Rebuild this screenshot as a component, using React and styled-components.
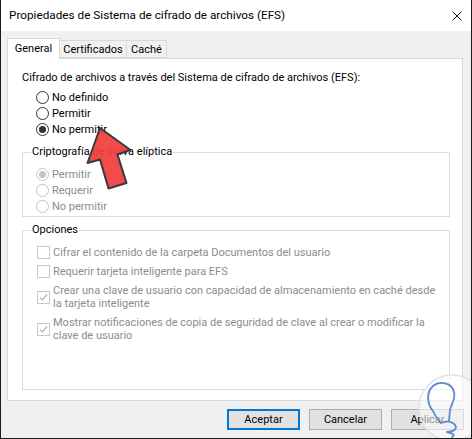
import React from "react";
import styled, { createGlobalStyle } from "styled-components";

const Global = createGlobalStyle`
  html, body { margin: 0; padding: 0; background: #fff; }
  body { font-family: Roboto, "Noto Sans", sans-serif; }
  * { box-sizing: border-box; }
`;

const Window = styled.div`
  position: relative;
  width: 472px;
  height: 439px;
  display: flex;
  flex-direction: column;
  border: 1px solid #1b1b1b;
  border-top: none;
  background: #f0f0f0;
  overflow: hidden;
  font-size: 11px;
  color: #000;
`;

const TitleBar = styled.div`
  height: 31px;
  flex: none;
  background: #fff;
  display: flex;
  align-items: center;
  justify-content: space-between;
  padding: 0 9px 0 8px;
  font-size: 11.75px;
`;

const TitleText = styled.span`
  padding-bottom: 1px;
`;

const Body = styled.div`
  flex: 1;
  display: flex;
  flex-direction: column;
  padding: 7px 8px 0 6px;
`;

const TabRow = styled.div`
  display: flex;
  align-items: flex-end;
  height: 21px;
  position: relative;
  z-index: 1;
  margin-bottom: -1px;
`;

const Tab = styled.div`
  width: ${(p) => p.$w}px;
  height: ${(p) => (p.$active ? "21px" : "18px")};
  padding-bottom: ${(p) => (p.$active ? "2px" : "0")};
  display: flex;
  align-items: center;
  justify-content: center;
  background: ${(p) => (p.$active ? "#fff" : "#f0f0f0")};
  border: 1px solid #d9d9d9;
  border-bottom: ${(p) => (p.$active ? "none" : "1px solid #d9d9d9")};
  margin-left: ${(p) => (p.$first ? "0" : "-1px")};
  ${(p) => (p.$active ? "" : "margin-bottom: 1px;")}
  white-space: nowrap;
`;

const Panel = styled.div`
  height: 343px;
  background: #fff;
  border: 1px solid #d9d9d9;
  padding: 11px 12px 0 14px;
  display: flex;
  flex-direction: column;
`;

const Heading = styled.div`
  line-height: 16px;
  white-space: nowrap;
`;

const RadioList = styled.div`
  display: flex;
  flex-direction: column;
  padding-left: 14px;
  margin-top: 3px;
`;

const RadioRow = styled.label`
  display: flex;
  align-items: center;
  height: 16px;
  gap: 3px;
  color: ${(p) => (p.$disabled ? "#8c8c8c" : "#000")};
  white-space: nowrap;
`;

const RadioCircle = styled.span`
  width: 13px;
  height: 13px;
  border-radius: 50%;
  border: 1px solid ${(p) => (p.$disabled ? "#c4c4c4" : "#333")};
  background: #fff;
  display: flex;
  align-items: center;
  justify-content: center;
  flex: none;
  &::after {
    content: "";
    width: 7px;
    height: 7px;
    border-radius: 50%;
    background: ${(p) => (p.$disabled ? "#c4c4c4" : "#333")};
    display: ${(p) => (p.$checked ? "block" : "none")};
  }
`;

const Group = styled.fieldset`
  margin: ${(p) => p.$mt || 0}px 0 0 0;
  padding: 0;
  border: 1px solid #dcdcdc;
  height: ${(p) => p.$h}px;
  min-width: 0;
`;

const Legend = styled.legend`
  margin-left: 8px;
  padding: 0 1px;
  line-height: 14px;
  color: #000;
`;

const GroupRadios = styled.div`
  display: flex;
  flex-direction: column;
  padding: 7px 0 0 13px;
`;

const CheckList = styled.div`
  display: flex;
  flex-direction: column;
  gap: 6px;
  padding: 9px 0 0 14px;
`;

const CheckRow = styled.div`
  display: flex;
  align-items: center;
  gap: 3px;
  color: #8c8c8c;
  line-height: 13px;
`;

const CheckBox = styled.span`
  width: 13px;
  height: 13px;
  border: 1px solid #c8c8c8;
  background: #fff;
  flex: none;
  display: flex;
  align-items: center;
  justify-content: center;
`;

const CheckText = styled.span`
  white-space: nowrap;
`;

const ButtonRow = styled.div`
  display: flex;
  justify-content: flex-end;
  gap: 9px;
  padding: 8px 0 0 0;
  margin-right: -1px;
`;

const Button = styled.div`
  width: 73px;
  height: 21px;
  background: #e1e1e1;
  border: ${(p) => (p.$default ? "2px solid #0078d7" : "1px solid #adadad")};
  display: flex;
  align-items: center;
  justify-content: center;
  padding-bottom: 1px;
`;

const Overlay = styled.svg`
  position: absolute;
  left: -1px;
  top: 0;
  pointer-events: none;
`;

function Radio({ checked, disabled, children }) {
  return (
    <RadioRow $disabled={disabled}>
      <RadioCircle $checked={checked} $disabled={disabled} />
      {children}
    </RadioRow>
  );
}

function Check({ checked, children }) {
  return (
    <CheckRow>
      <CheckBox>
        {checked && (
          <svg width="9" height="9" viewBox="0 0 9 9">
            <path d="M1 4.5 L3.5 7 L8 1.5" fill="none" stroke="#b8b8b8" strokeWidth="1.2" />
          </svg>
        )}
      </CheckBox>
      <CheckText>{children}</CheckText>
    </CheckRow>
  );
}

export default function App() {
  return (
    <>
      <Global />
      <Window>
        <TitleBar>
          <TitleText>Propiedades de Sistema de cifrado de archivos (EFS)</TitleText>
          <svg width="10" height="10" viewBox="0 0 10 10">
            <path d="M0.5 0.5 L9.5 9.5 M9.5 0.5 L0.5 9.5" stroke="#111" strokeWidth="1" />
          </svg>
        </TitleBar>
        <Body>
          <TabRow>
            <Tab $active $first $w={53}>General</Tab>
            <Tab $w={68}>Certificados</Tab>
            <Tab $w={41}>Caché</Tab>
          </TabRow>
          <Panel>
            <Heading>Cifrado de archivos a través del Sistema de cifrado de archivos (EFS):</Heading>
            <RadioList>
              <Radio>No definido</Radio>
              <Radio>Permitir</Radio>
              <Radio checked>No permitir</Radio>
            </RadioList>
            <Group $mt={8} $h={72}>
              <Legend>Criptografía de curva elíptica</Legend>
              <GroupRadios>
                <Radio checked disabled>Permitir</Radio>
                <Radio disabled>Requerir</Radio>
                <Radio disabled>No permitir</Radio>
              </GroupRadios>
            </Group>
            <Group $mt={6} $h={167}>
              <Legend>Opciones</Legend>
              <CheckList>
                <Check>Cifrar el contenido de la carpeta Documentos del usuario</Check>
                <Check>Requerir tarjeta inteligente para EFS</Check>
                <Check checked>
                  Crear una clave de usuario con capacidad de almacenamiento en caché desde
                  <br />
                  la tarjeta inteligente
                </Check>
                <Check checked>
                  Mostrar notificaciones de copia de seguridad de clave al crear o modificar la
                  <br />
                  clave de usuario
                </Check>
              </CheckList>
            </Group>
          </Panel>
          <ButtonRow>
            <Button $default>Aceptar</Button>
            <Button>Cancelar</Button>
            <Button>Aplicar</Button>
          </ButtonRow>
        </Body>
        <Overlay width="472" height="439" viewBox="0 0 472 439">
          <polygon
            points="100,128 130.5,150 117.5,154.5 126.5,183 108.5,188.5 100,159.5 87.5,163"
            fill="#f23c3c"
            fillOpacity="0.93"
            stroke="#3a3a3a"
            strokeWidth="2"
            strokeLinejoin="round"
          />
          <circle cx="452" cy="408" r="33" fill="#ffffff" fillOpacity="0.55" stroke="#e2e2e2" strokeWidth="1.5" />
          <path
            d="M433 411 C427 404 426 392 433 386 C440 380 452 383 454 392 C456 400 451 404 450 410 L449 421 M433 411 C435 416 438 420 441 423 C446 421 452 421 455 425 C458 430 452 432 447 432 C452 433 456 435 452 437"
            fill="none"
            stroke="#5a8ccc"
            strokeWidth="1.8"
            strokeLinecap="round"
            strokeLinejoin="round"
          />
        </Overlay>
      </Window>
    </>
  );
}
